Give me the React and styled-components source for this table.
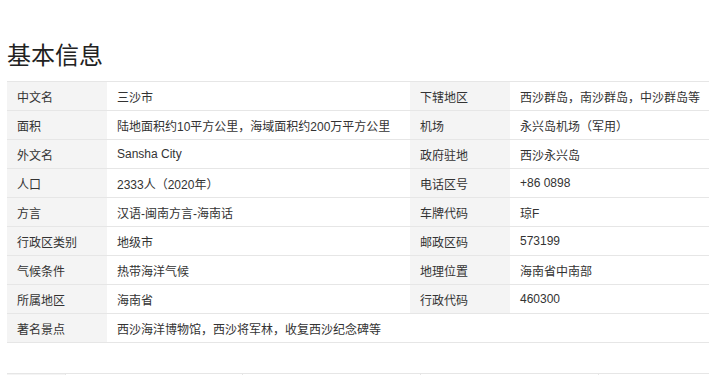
import styled, { createGlobalStyle } from 'styled-components'

const BASIC_INFO = [
    [['中文名', '三沙市'], ['下辖地区', '西沙群岛，南沙群岛，中沙群岛等']],
    [['面积', '陆地面积约10平方公里，海域面积约200万平方公里'], ['机场', '永兴岛机场（军用）']],
    [['外文名', 'Sansha City'], ['政府驻地', '西沙永兴岛']],
    [['人口', '2333人（2020年）'], ['电话区号', '+86 0898']],
    [['方言', '汉语-闽南方言-海南话'], ['车牌代码', '琼F']],
    [['行政区类别', '地级市'], ['邮政区码', '573199']],
    [['气候条件', '热带海洋气候'], ['地理位置', '海南省中南部']],
    [['所属地区', '海南省'], ['行政代码', '460300']],
    [['著名景点', '西沙海洋博物馆，西沙将军林，收复西沙纪念碑等']],
]

const GlobalStyle = createGlobalStyle`
    html, body {
        margin: 0;
        padding: 0;
        background: #fff;
        overflow: hidden;
    }
    body {
        font-family: "Liberation Sans", "Noto Sans CJK SC", sans-serif;
        color: #333;
    }
`

const Page = styled.div`
    width: 709px;
    height: 375px;
    overflow: hidden;
    padding-left: 7px;
    box-sizing: border-box;
`

const Title = styled.h2`
    margin: 40px 0 9px;
    font-size: 24px;
    font-weight: normal;
    line-height: 32px;
    color: #222;
`

const InfoTable = styled.table`
    border-collapse: collapse;
    table-layout: fixed;
    width: 806px;
    font-size: 12px;
`

const Row = styled.tr`
    height: 29px;
    border-top: 1px solid #e6e6e6;
    border-bottom: 1px solid #e6e6e6;
`

const Label = styled.td`
    width: 100px;
    padding: 0 0 0 10px;
    background: #f4f4f4;
    color: #333;
    white-space: nowrap;
    box-sizing: border-box;
`

const Value = styled.td`
    padding: 0 0 0 10px;
    color: #333;
    white-space: nowrap;
    box-sizing: border-box;
`

const NextTable = styled.div`
    display: grid;
    grid-template-columns: 59px 177px 178px 178px;
    margin-top: 30px;
    border-top: 1px solid #e6e6e6;
    height: 29px;
`

const NextCell = styled.div`
    background: ${(p) => (p.$label ? '#f4f4f4' : '#fff')};
    border-right: 1px solid #e6e6e6;
`

export default function App() {
    return (
        <>
            <GlobalStyle />
            <Page>
                <Title>基本信息</Title>
                <InfoTable>
                    <colgroup>
                        <col style={{ width: 100 }} />
                        <col style={{ width: 303 }} />
                        <col style={{ width: 100 }} />
                        <col style={{ width: 303 }} />
                    </colgroup>
                    <tbody>
                        {BASIC_INFO.map((pairs) => (
                            <Row key={pairs[0][0]}>
                                {pairs.map(([label, value]) => [
                                    <Label key={label}>{label}</Label>,
                                    <Value key={label + '-v'} colSpan={pairs.length === 1 ? 3 : 1}>
                                        {value}
                                    </Value>,
                                ])}
                            </Row>
                        ))}
                    </tbody>
                </InfoTable>
                <NextTable>
                    <NextCell $label />
                    <NextCell />
                    <NextCell />
                    <NextCell />
                </NextTable>
            </Page>
        </>
    )
}
